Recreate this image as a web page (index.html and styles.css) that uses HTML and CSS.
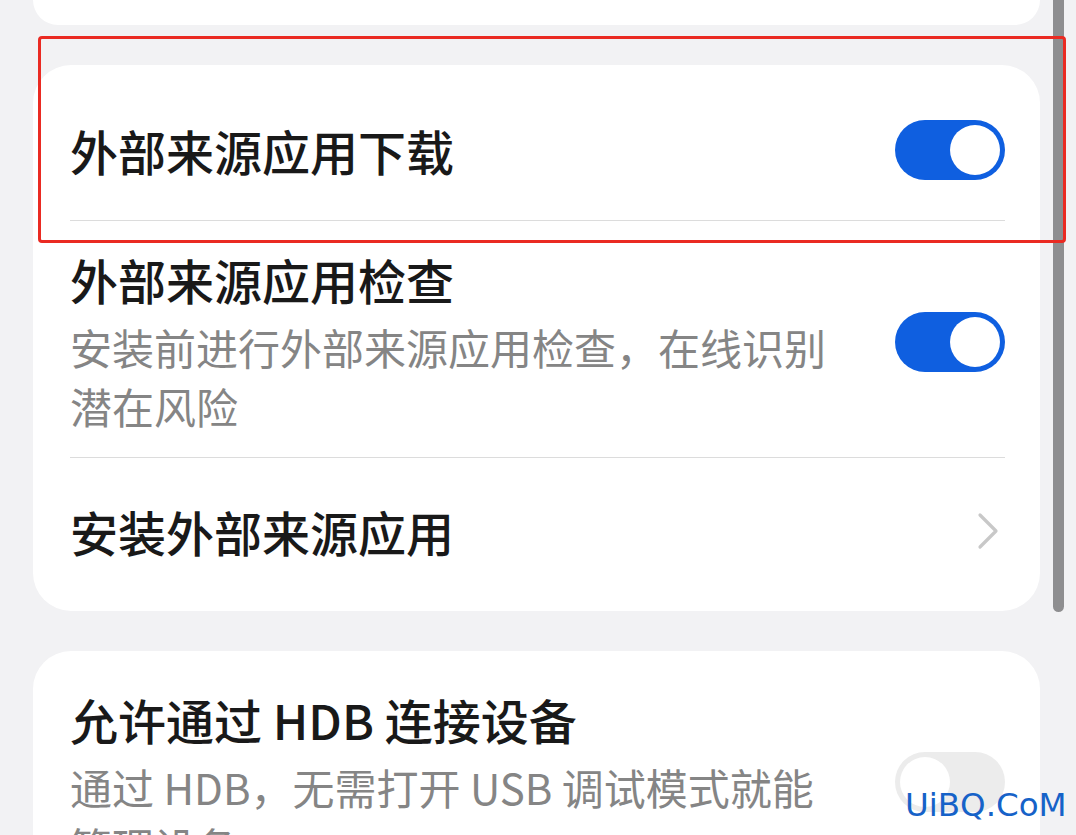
FILE: index.html
```html
<!DOCTYPE html>
<html>
<head>
  <meta charset="utf-8">
  <title>外部来源应用</title>
  <link rel="stylesheet" href="styles.css">
</head>
<body>
  <div class="page">
    <div class="card card-top"></div>

    <div class="card">
      <div class="row">
        <div class="text">
          <div class="title">外部来源应用下载</div>
        </div>
        <span class="switch on"><span class="knob"></span></span>
      </div>
      <div class="row row-sub">
        <div class="text">
          <div class="title">外部来源应用检查</div>
          <div class="sub">安装前进行外部来源应用检查，在线识别潜在风险</div>
        </div>
        <span class="switch on"><span class="knob"></span></span>
      </div>
      <div class="row row-link">
        <div class="text">
          <div class="title">安装外部来源应用</div>
        </div>
        <svg class="chevron" width="22" height="38" viewBox="0 0 22 38">
          <path d="M3 3 L19 19 L3 35" fill="none" stroke="#c8c8c8" stroke-width="3.2" stroke-linecap="round" stroke-linejoin="round"/>
        </svg>
      </div>
    </div>

    <div class="card">
      <div class="row row-sub row-last">
        <div class="text">
          <div class="title">允许通过 HDB 连接设备</div>
          <div class="sub">通过 HDB，无需打开 USB 调试模式就能管理设备</div>
        </div>
        <span class="switch off"><span class="knob"></span></span>
      </div>
    </div>
  </div>

  <div class="scrollbar"></div>
  <div class="mark"></div>
  <div class="watermark">UiBQ.CoM</div>
</body>
</html>
```

FILE: styles.css
```css
html, body {
  margin: 0;
  height: 100%;
  overflow: hidden;
}
body {
  background: #f2f2f4;
  font-family: "Noto Sans CJK SC", "Noto Sans", sans-serif;
  position: relative;
}
.page {
  width: 1007px;
  margin-left: 33px;
  display: flex;
  flex-direction: column;
  gap: 40px;
}
.card {
  background: #ffffff;
  border-radius: 38px;
  padding: 0 35px 0 37px;
}
.card-top {
  height: 25px;
  border-radius: 0 0 38px 38px;
}
.row {
  display: flex;
  align-items: center;
  justify-content: space-between;
  padding: 55px 0 40px;
  border-bottom: 1px solid #dcdcdc;
}
.row-sub {
  padding: 28px 0 22px;
}
.row-link {
  padding: 43px 0 50px;
  border-bottom: none;
}
.row-last {
  padding-top: 38px;
  border-bottom: none;
}
.text {
  width: 770px;
}
.title {
  font-size: 48px;
  line-height: 60px;
  font-weight: 500;
  color: #191919;
}
.sub {
  margin-top: 8px;
  font-size: 42px;
  line-height: 59px;
  color: #858585;
}
.switch {
  flex: none;
  width: 110px;
  height: 60px;
  border-radius: 30px;
  box-sizing: border-box;
  padding: 5px;
  display: flex;
}
.switch.on {
  background: #0f5fe0;
  justify-content: flex-end;
}
.switch.off {
  background: #ececec;
  justify-content: flex-start;
}
.knob {
  width: 50px;
  height: 50px;
  border-radius: 50%;
  background: #ffffff;
}
.chevron {
  margin-right: 6px;
}
.scrollbar {
  position: absolute;
  left: 1053px;
  top: -10px;
  width: 11px;
  height: 622px;
  border-radius: 6px;
  background: #8e8e90;
}
.mark {
  position: absolute;
  left: 38px;
  top: 36px;
  width: 1028px;
  height: 207px;
  box-sizing: border-box;
  border: 3px solid #ea2a22;
  border-radius: 4px;
}
.watermark {
  position: absolute;
  left: 905px;
  top: 786px;
  font-family: "DejaVu Sans", "Liberation Sans", sans-serif;
  font-size: 32.5px;
  color: #1662c8;
}
```
